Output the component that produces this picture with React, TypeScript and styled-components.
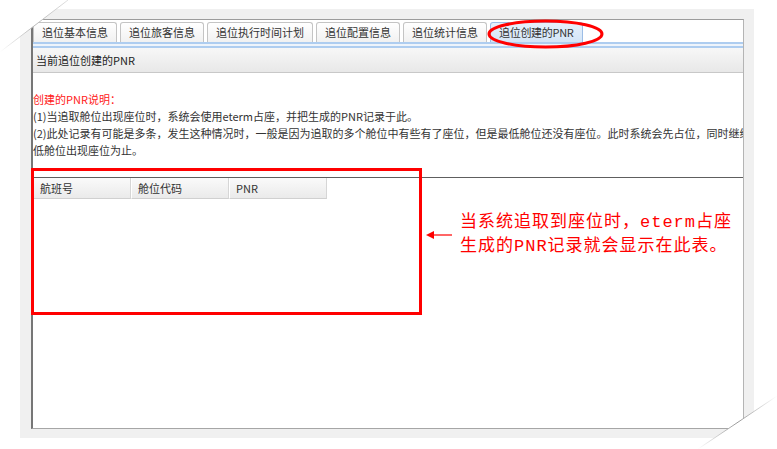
import React from 'react';
import styled, { createGlobalStyle } from 'styled-components';

const GlobalStyle = createGlobalStyle`
  html, body {
    margin: 0;
    padding: 0;
    background: #ffffff;
  }
  body {
    font-family: "Noto Sans CJK SC", "Noto Sans", sans-serif;
  }
`;

const Stage = styled.div`
  position: relative;
  width: 777px;
  height: 449px;
  padding: 9px 23px 11px 20px;
  box-sizing: border-box;
  background: #ffffff;
  overflow: hidden;
`;

const Panel = styled.div`
  width: 734px;
  height: 429px;
  padding: 10px 10px 9px 11px;
  box-sizing: border-box;
  background: #f0f0f0;
`;

const Frame = styled.div`
  width: 713px;
  height: 410px;
  box-sizing: border-box;
  border-top: 1px solid #9c9c9c;
  border-left: 2px solid #767676;
  border-right: 1px solid #b4b4b4;
  border-bottom: 1px solid #a6a6a6;
  background: #ffffff;
  display: flex;
  flex-direction: column;
  overflow: hidden;
  font-size: 11px;
  color: #333;
`;

const TabStrip = styled.div`
  height: 22px;
  display: flex;
  align-items: flex-end;
  gap: 3px;
  flex-shrink: 0;
`;

const Tab = styled.div<{ $active?: boolean }>`
  height: 20px;
  box-sizing: border-box;
  padding: 0 8px;
  display: flex;
  align-items: center;
  border: 1px solid ${(p) => (p.$active ? '#9cbde6' : '#c4c4c4')};
  border-bottom: none;
  border-radius: 3px 3px 0 0;
  background: ${(p) =>
    p.$active
      ? 'linear-gradient(#e6f0fb, #d4e5f7)'
      : 'linear-gradient(#ffffff, #f1f1f1)'};
  color: #333;
  white-space: nowrap;
  line-height: 1;
  letter-spacing: ${(p) => (p.$active ? '-0.3px' : '0')};
`;

const BlueRule = styled.div`
  height: 6px;
  flex-shrink: 0;
  box-sizing: border-box;
  border-top: 2px solid #aecdf0;
  border-bottom: 2px solid #aecdf0;
  background: #eef4fb;
`;

const HeaderBar = styled.div`
  height: 25px;
  flex-shrink: 0;
  box-sizing: border-box;
  padding-left: 3px;
  display: flex;
  align-items: center;
  background: linear-gradient(#f7f7f7, #e8e8e8);
  border-bottom: 1px solid #c8c8c8;
  color: #222;
`;

const Notes = styled.div`
  padding-top: 18px;
  line-height: 17px;
  flex-shrink: 0;
  overflow: hidden;
`;

const NoteLine = styled.div<{ $red?: boolean }>`
  white-space: nowrap;
  overflow: hidden;
  color: ${(p) => (p.$red ? '#ff2020' : '#333')};
`;

const Separator = styled.div`
  margin-top: 18px;
  height: 1px;
  flex-shrink: 0;
  background: #5e5e5e;
`;

const GridHead = styled.div`
  display: flex;
  flex-shrink: 0;
`;

const HeadCell = styled.div`
  width: 98px;
  height: 21px;
  box-sizing: border-box;
  padding-left: 6px;
  display: flex;
  align-items: center;
  background: linear-gradient(#fafafa, #eaeaea);
  border-left: 1px solid #ffffff;
  border-right: 1px solid #d6d6d6;
  border-bottom: 1px solid #d0d0d0;
  color: #333;
`;

const Highlight = styled.div`
  position: absolute;
  left: 31px;
  top: 168px;
  width: 391px;
  height: 147px;
  box-sizing: border-box;
  border: 3px solid #ff0000;
`;

const Callout = styled.div`
  position: absolute;
  left: 425px;
  top: 211px;
  display: flex;
  align-items: center;
  gap: 7px;
`;

const CalloutText = styled.div`
  font-family: "Liberation Mono", "Noto Sans CJK SC", monospace;
  font-size: 17px;
  letter-spacing: 1px;
  line-height: 24px;
  color: #ff0000;
  white-space: nowrap;
`;

const Overlay = styled.svg`
  position: absolute;
  pointer-events: none;
`;

export default function App() {
  return (
    <>
      <GlobalStyle />
      <Stage>
        <Panel>
          <Frame>
            <TabStrip>
              <Tab>追位基本信息</Tab>
              <Tab>追位旅客信息</Tab>
              <Tab>追位执行时间计划</Tab>
              <Tab>追位配置信息</Tab>
              <Tab>追位统计信息</Tab>
              <Tab $active>追位创建的PNR</Tab>
            </TabStrip>
            <BlueRule />
            <HeaderBar>当前追位创建的PNR</HeaderBar>
            <Notes>
              <NoteLine $red>创建的PNR说明：</NoteLine>
              <NoteLine>(1)当追取舱位出现座位时，系统会使用eterm占座，并把生成的PNR记录于此。</NoteLine>
              <NoteLine>(2)此处记录有可能是多条，发生这种情况时，一般是因为追取的多个舱位中有些有了座位，但是最低舱位还没有座位。此时系统会先占位，同时继续追取，直到最</NoteLine>
              <NoteLine>低舱位出现座位为止。</NoteLine>
            </Notes>
            <Separator />
            <GridHead>
              <HeadCell>航班号</HeadCell>
              <HeadCell>舱位代码</HeadCell>
              <HeadCell>PNR</HeadCell>
            </GridHead>
          </Frame>
        </Panel>

        <Highlight />

        <Overlay style={{ left: 486, top: 18 }} width="120" height="33" viewBox="0 0 120 33">
          <ellipse cx="59.5" cy="16" rx="56.5" ry="13" fill="none" stroke="#ff0000" strokeWidth="3" />
        </Overlay>

        <Callout>
          <svg width="28" height="12" viewBox="0 0 28 12">
            <line x1="4" y1="6" x2="27" y2="6" stroke="#ff0000" strokeWidth="1.2" />
            <polygon points="1,6 9,2 9,10" fill="#ff0000" />
          </svg>
          <CalloutText>
            当系统追取到座位时，eterm占座
            <br />
            生成的PNR记录就会显示在此表。
          </CalloutText>
        </Callout>

        {/* page curl corners */}
        <Overlay style={{ left: 0, top: 0 }} width="80" height="60" viewBox="0 0 80 60">
          <defs>
            <linearGradient id="curlA" x1="0" y1="1" x2="1" y2="0">
              <stop offset="0" stopColor="#ffffff" />
              <stop offset="0.5" stopColor="#b8b8b8" />
              <stop offset="1" stopColor="#e0e0e0" />
            </linearGradient>
          </defs>
          <polygon points="0,0 68,0 0,52" fill="#ffffff" />
          <line x1="0" y1="52" x2="68" y2="0" stroke="url(#curlA)" strokeWidth="1" />
        </Overlay>
        <Overlay style={{ left: 690, top: 390 }} width="87" height="59" viewBox="0 0 87 59">
          <defs>
            <linearGradient id="curlB" x1="0" y1="1" x2="1" y2="0">
              <stop offset="0" stopColor="#ffffff" />
              <stop offset="0.5" stopColor="#9a9a9a" />
              <stop offset="1" stopColor="#ffffff" />
            </linearGradient>
          </defs>
          <polygon points="87,6 87,59 8,59" fill="#ffffff" />
          <line x1="8" y1="59" x2="87" y2="6" stroke="url(#curlB)" strokeWidth="1" />
        </Overlay>
      </Stage>
    </>
  );
}
